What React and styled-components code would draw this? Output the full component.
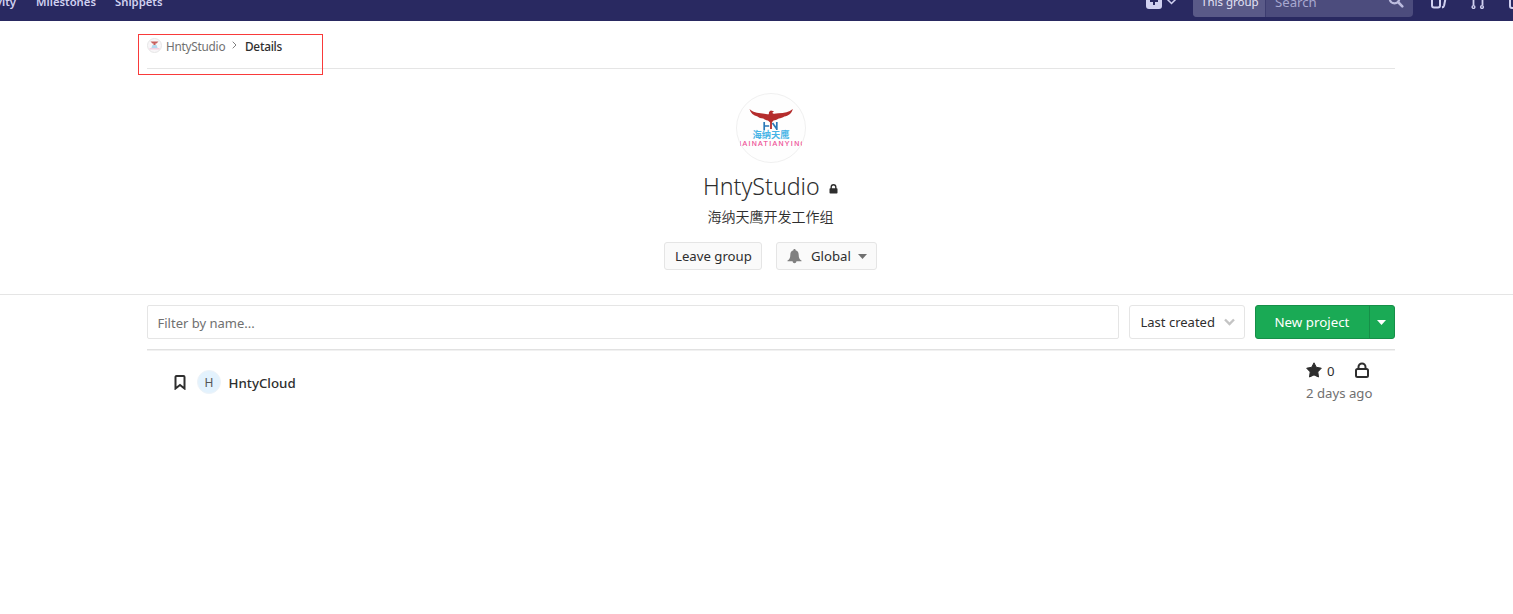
import React from 'react';
import styled, { createGlobalStyle } from 'styled-components';

const Global = createGlobalStyle`
  * { box-sizing: border-box; }
  body {
    margin: 0;
    background: #fff;
    color: #2e2e2e;
    font-family: "Noto Sans", "Open Sans", "Noto Sans CJK SC", sans-serif;
    font-size: 13.2px;
    line-height: 20px;
    overflow: hidden;
  }
  svg { display: block; flex: none; }
`;

const Page = styled.div`
  position: relative;
  width: 1513px;
  height: 614px;
  overflow: hidden;
`;

const Navbar = styled.header`
  display: flex;
  align-items: flex-end;
  height: 21px;
  overflow: hidden;
  background: #292961;
`;

const NavInner = styled.div`
  display: flex;
  align-items: center;
  flex: none;
  width: 1540px;
  height: 40px;
  color: #d1d1f0;
`;

const NavLinks = styled.nav`
  display: flex;
  gap: 20px;
  width: 1146px;
  margin-left: -26px;
  padding-top: 2px;
  font-size: 11.3px;
  font-weight: 600;
`;

const NavLink = styled.span`
  flex: none;
  width: ${(p) => p.$width}px;
  text-align: ${(p) => p.$align || 'left'};
  white-space: nowrap;
`;

const CreateMenu = styled.div`
  display: flex;
  align-items: center;
  gap: 4px;
  width: 47px;
  margin-left: 26px;
`;

const SearchBox = styled.div`
  display: flex;
  width: 220px;
  height: 32px;
  margin-top: -1px;
  border-radius: 4px;
  overflow: hidden;
  background: #4c4c7d;
`;

const SearchScope = styled.div`
  width: 73px;
  padding: 7px 0 0 8px;
  border-right: 1px solid #3d3d70;
  background: #5a5a88;
  color: #e4e4f6;
  font-size: 11.5px;
  line-height: 20px;
  white-space: nowrap;
`;

const SearchField = styled.div`
  display: flex;
  flex: 1;
  justify-content: space-between;
  padding: 7px 9px 0 9px;
  color: #a8a8d0;
  font-size: 13.2px;
  line-height: 20px;
`;

const NavIcons = styled.div`
  display: flex;
  align-items: center;
  gap: 24px;
  margin-left: 17px;
`;

const Container = styled.div`
  width: 1248px;
  margin: 0 auto 0 147px;
`;

const Breadcrumbs = styled(Container)`
  display: flex;
  align-items: center;
  height: 48px;
  border-top: 1px solid transparent;
  border-bottom: 1px solid #e5e5e5;
  color: #707070;
  font-size: 11.8px;
  letter-spacing: -0.25px;
`;

const Crumb = styled.span`
  width: ${(p) => p.$width}px;
  margin-left: ${(p) => p.$gap}px;
  padding-top: ${(p) => p.$drop || 0}px;
  white-space: nowrap;
  color: ${(p) => (p.$active ? '#2e2e2e' : '#707070')};
  font-weight: ${(p) => (p.$active ? 500 : 400)};
`;

const Annotation = styled.div`
  position: absolute;
  left: 138px;
  top: 34px;
  width: 185px;
  height: 41px;
  border: 1px solid #f93a3a;
`;

const GroupHome = styled.section`
  display: flex;
  flex-direction: column;
  align-items: center;
  height: 226px;
  padding: 24px 0 0 28px;
  border-bottom: 1px solid #e5e5e5;
`;

const GroupTitle = styled.h1`
  display: flex;
  align-items: center;
  gap: 9px;
  width: 135px;
  height: 32px;
  margin: 7px 0 0 0;
  font-size: 23.2px;
  font-weight: 350;
  line-height: 32px;
  white-space: nowrap;
  svg { margin-top: 5px; }
`;

const TitleText = styled.span`
  width: 117px;
`;

const Description = styled.p`
  margin: 4px 0 0 0;
  height: 20px;
  font-family: "Noto Sans CJK SC", sans-serif;
  font-size: 14px;
  font-weight: 350;
  line-height: 20px;
`;

const Actions = styled.div`
  display: flex;
  gap: 14px;
  margin-top: 16px;
`;

const Button = styled.button`
  display: flex;
  align-items: center;
  width: ${(p) => p.$width}px;
  height: 28px;
  padding: 0 0 0 10px;
  border: 1px solid #e5e5e5;
  border-radius: 3px;
  background: #fafafa;
  color: #2e2e2e;
  font: inherit;
  white-space: nowrap;
`;

const ButtonText = styled.span`
  width: ${(p) => p.$width}px;
  margin-left: ${(p) => p.$gap || 0}px;
  text-align: left;
`;

const Filters = styled(Container)`
  display: flex;
  gap: 10px;
  height: 55px;
  padding-top: 10px;
  border-bottom: 1px solid #e1e1e1;
  box-shadow: 0 1px 0 #f1f1f1;
`;

const FilterInput = styled.input`
  width: 972px;
  height: 34px;
  padding: 2px 10px 0 9.500px;
  border: 1px solid #e5e5e5;
  border-radius: 2px;
  font: inherit;
  font-size: 13px;
  outline: none;
  &::placeholder { color: #707070; opacity: 1; }
`;

const SortSelect = styled.div`
  display: flex;
  align-items: center;
  justify-content: space-between;
  width: 116px;
  height: 34px;
  padding: 0 9px 0 10.500px;
  border: 1px solid #e5e5e5;
  border-radius: 3px;
  font-size: 13px;
  white-space: nowrap;
`;

const SplitButton = styled.div`
  display: flex;
  width: 140px;
  height: 34px;
  border: 1px solid #168f48;
  border-radius: 3px;
  background: #1aaa55;
  color: #fff;
`;

const NewProject = styled.div`
  width: 114px;
  padding-left: 18.500px;
  border-right: 1px solid #168f48;
  font-size: 13.3px;
  line-height: 32px;
  white-space: nowrap;
`;

const SplitToggle = styled.div`
  display: flex;
  flex: 1;
  align-items: center;
  justify-content: center;
  padding-right: 1px;
`;

const ProjectRow = styled(Container)`
  display: flex;
  align-items: center;
  height: 64px;
  padding: 0 21px 0 27px;
`;

const Avatar = styled.div`
  width: 24px;
  height: 24px;
  margin: 0 7.500px 0 11px;
  border: 1px solid #eef3f8;
  border-radius: 50%;
  background: #e3f2fd;
  color: #555;
  font-size: 12px;
  line-height: 24px;
  text-align: center;
`;

const ProjectName = styled.span`
  flex: 1;
  padding-top: 2px;
  font-weight: 550;
  font-size: 13.3px;
`;

const Meta = styled.div`
  width: 68px;
  height: 46px;
`;

const Stats = styled.div`
  display: flex;
  align-items: center;
  height: 22px;
`;

const StarCount = styled.span`
  width: 8px;
  margin: 2px 19px 0 5px;
`;

const Updated = styled.div`
  margin-top: 1px;
  color: #707070;
  line-height: 22px;
  white-space: nowrap;
`;

const Caret = ({ color }) => (
  <svg width="9" height="5" viewBox="0 0 9 5"><path d="M0 0h9L4.500 5z" fill={color} /></svg>
);

const Eagle = () => (
  <svg width="70" height="70" viewBox="0 0 70 70">
    <circle cx="35" cy="35" r="34.500" fill="#fefefe" stroke="#f0f0f0" />
    <path d="M28.200 29v8M28.200 33h5M40.800 29v8M36.500 30l4.300 6" stroke="#2878b8" strokeWidth="1.700" fill="none" />
    <path d="M13.500 16c3 3.200 8 4.200 13 4.500 3 .2 5 1 6.300.8l.2-2.200 1.800-1.600 3.200.8-1.700 1.400c.8 1.700 3 .9 6 .6 6-.5 11-1.400 14.500-4.400-1 4.600-4.500 6.600-8.500 7.600-1.500 1.200-3.500 1.700-5.500 2-1.800 1.300-3.800 1.700-5.700 2.200l-1.200 1.800v6.400h-1.800v-6.400l-2.100-1.900c-2-.3-3.500-.8-4.700-2-2.500-.2-4.500-.9-5.800-2.100-4-1-7-3.600-8-7.600z" fill="#b52d2d" />
    <text x="16.500" y="45" textLength="37" lengthAdjust="spacingAndGlyphs" fontFamily="Noto Sans CJK SC, sans-serif" fontSize="9" fontWeight="600" fill="#46b4e6">海纳天鹰</text>
    <svg x="4" y="44" width="62" height="12" viewBox="4 44 62 12">
      <text x="0" y="53" textLength="70" fontFamily="Liberation Sans, sans-serif" fontSize="7" fill="#ee4c94" stroke="#ee4c94" strokeWidth=".15">HAINATIANYING</text>
    </svg>
  </svg>
);

const MiniEagle = () => (
  <svg width="15" height="15" viewBox="0 0 15 15">
    <circle cx="7.500" cy="7.500" r="7" fill="#f8f6f8" stroke="#e6e6e6" />
    <path d="M3.500 3.500h8l-2 2h-1V7h-2V5.500h-1z" fill="#c8605f" />
    <path d="M5.500 7h4l1.200 3.200H4.300z" fill="#b3d9ee" />
    <path d="M2.500 10.800h10" stroke="#f3c9dd" strokeWidth="1.300" />
  </svg>
);

const Lock = () => (
  <svg width="9" height="10" viewBox="0 0 9 10">
    <path d="M2.200 5V3a2.300 2.300 0 0 1 4.600 0v2" fill="none" stroke="#2e2e2e" strokeWidth="1.400" />
    <rect x=".5" y="4.300" width="8" height="5.200" rx=".8" fill="#2e2e2e" />
  </svg>
);

export default function App() {
  return (
    <Page>
      <Global />
      <Navbar>
        <NavInner>
          <NavLinks>
            <NavLink $width={42} $align="right">Activity</NavLink>
            <NavLink $width={59}>Milestones</NavLink>
            <NavLink $width={60}>Snippets</NavLink>
          </NavLinks>
          <CreateMenu>
            <svg width="16" height="16" viewBox="0 0 16 16">
              <rect width="16" height="16" rx="3" fill="#d1d1f0" />
              <path d="M8 4v8M4 8h8" stroke="#292961" strokeWidth="2" />
            </svg>
            <svg width="11" height="7" viewBox="0 0 11 7"><path d="M1 1l4.500 4.500L10 1" fill="none" stroke="#d1d1f0" strokeWidth="1.500" /></svg>
          </CreateMenu>
          <SearchBox>
            <SearchScope>This group</SearchScope>
            <SearchField>
              Search
              <svg width="16" height="16" viewBox="0 0 16 16"><circle cx="6.500" cy="6.500" r="4.800" fill="none" stroke="#bcbcdf" strokeWidth="2.200" /><path d="M10 10l4.300 4.300" stroke="#bcbcdf" strokeWidth="2.600" strokeLinecap="round" /></svg>
            </SearchField>
          </SearchBox>
          <NavIcons>
            <svg width="17" height="16" viewBox="0 0 17 16"><path d="M2 1v11.500a2 2 0 0 0 2 2h4a2 2 0 0 0 2-2V1M12 14.500c1.500-.2 1.800-.8 2.100-2L16 3" fill="none" stroke="#d1d1f0" strokeWidth="2" /></svg>
            <svg width="14" height="16" viewBox="0 0 14 16"><path d="M2.500 2v10M11.500 5v7" fill="none" stroke="#d1d1f0" strokeWidth="1.800" /><circle cx="2.500" cy="14" r="1.400" fill="#292961" stroke="#d1d1f0" strokeWidth="1.400" /><circle cx="11" cy="14" r="1.400" fill="#292961" stroke="#d1d1f0" strokeWidth="1.400" /></svg>
            <svg width="16" height="16" viewBox="0 0 16 16"><rect x="1" y="1" width="14" height="14" rx="2" fill="none" stroke="#d1d1f0" strokeWidth="2" /></svg>
          </NavIcons>
        </NavInner>
      </Navbar>
      <Breadcrumbs>
        <MiniEagle />
        <Crumb $width={59} $gap={4} $drop={1}>HntyStudio</Crumb>
        <Crumb as="svg" $width={5} $gap={7} width="5" height="8" viewBox="0 0 5 8"><path d="M.7.700L4 4 .7 7.300" fill="none" stroke="#808080" strokeWidth="1" /></Crumb>
        <Crumb $width={40} $gap={8} $drop={1} $active>Details</Crumb>
      </Breadcrumbs>
      <GroupHome>
        <Eagle />
        <GroupTitle><TitleText>HntyStudio</TitleText><Lock /></GroupTitle>
        <Description>海纳天鹰开发工作组</Description>
        <Actions>
          <Button $width={98}><ButtonText $width={76}>Leave group</ButtonText></Button>
          <Button $width={101}>
            <svg width="15" height="15" viewBox="0 0 15 15"><path d="M7.500 0c.8 0 1.100.5 1.100 1.200C11 1.800 11.700 4 11.700 6c0 3 1 4.500 2.800 5.500v.8H.5v-.8C2.300 10.500 3.300 9 3.300 6c0-2 .7-4.200 3.100-4.800C6.400.5 6.700 0 7.500 0zM5.500 12h4c-.3 3-3.700 3-4 0z" fill="#808080" /></svg>
            <ButtonText $width={41} $gap={9}>Global</ButtonText>
            <ButtonText $width={9} $gap={5.5}><Caret color="#707070" /></ButtonText>
          </Button>
        </Actions>
      </GroupHome>
      <Filters>
        <FilterInput placeholder="Filter by name..." />
        <SortSelect>
          Last created
          <svg width="11" height="8" viewBox="0 0 11 8"><path d="M1 1.500l4.500 4.500L10 1.500" fill="none" stroke="#c4c4c4" strokeWidth="2.400" /></svg>
        </SortSelect>
        <SplitButton>
          <NewProject>New project</NewProject>
          <SplitToggle><Caret color="#fff" /></SplitToggle>
        </SplitButton>
      </Filters>
      <ProjectRow>
        <svg width="12" height="15" viewBox="0 0 12 15"><path d="M2.500 1h7a1 1 0 0 1 1 1v11.500L6 10 1.500 13.500V2a1 1 0 0 1 1-1z" fill="none" stroke="#2e2e2e" strokeWidth="2" /></svg>
        <Avatar>H</Avatar>
        <ProjectName>HntyCloud</ProjectName>
        <Meta>
          <Stats>
            <svg width="16" height="16" viewBox="0 0 16 16"><path d="M8 .8l2.300 4.500 5 .9-3.500 3.700.7 5.100L8 12.900 3.500 15l.7-5.100L.7 6.200l5-.9z" fill="#2e2e2e" stroke="#2e2e2e" strokeWidth="1" strokeLinejoin="round" /></svg>
            <StarCount>0</StarCount>
            <svg width="16" height="16" viewBox="0 0 16 16"><rect x="2" y="7" width="12" height="8" rx="1.500" fill="none" stroke="#2e2e2e" strokeWidth="2" /><path d="M4.500 7V5a3.500 3.500 0 0 1 7 0v2" fill="none" stroke="#2e2e2e" strokeWidth="2" /></svg>
          </Stats>
          <Updated>2 days ago</Updated>
        </Meta>
      </ProjectRow>
      <Annotation />
    </Page>
  );
}
